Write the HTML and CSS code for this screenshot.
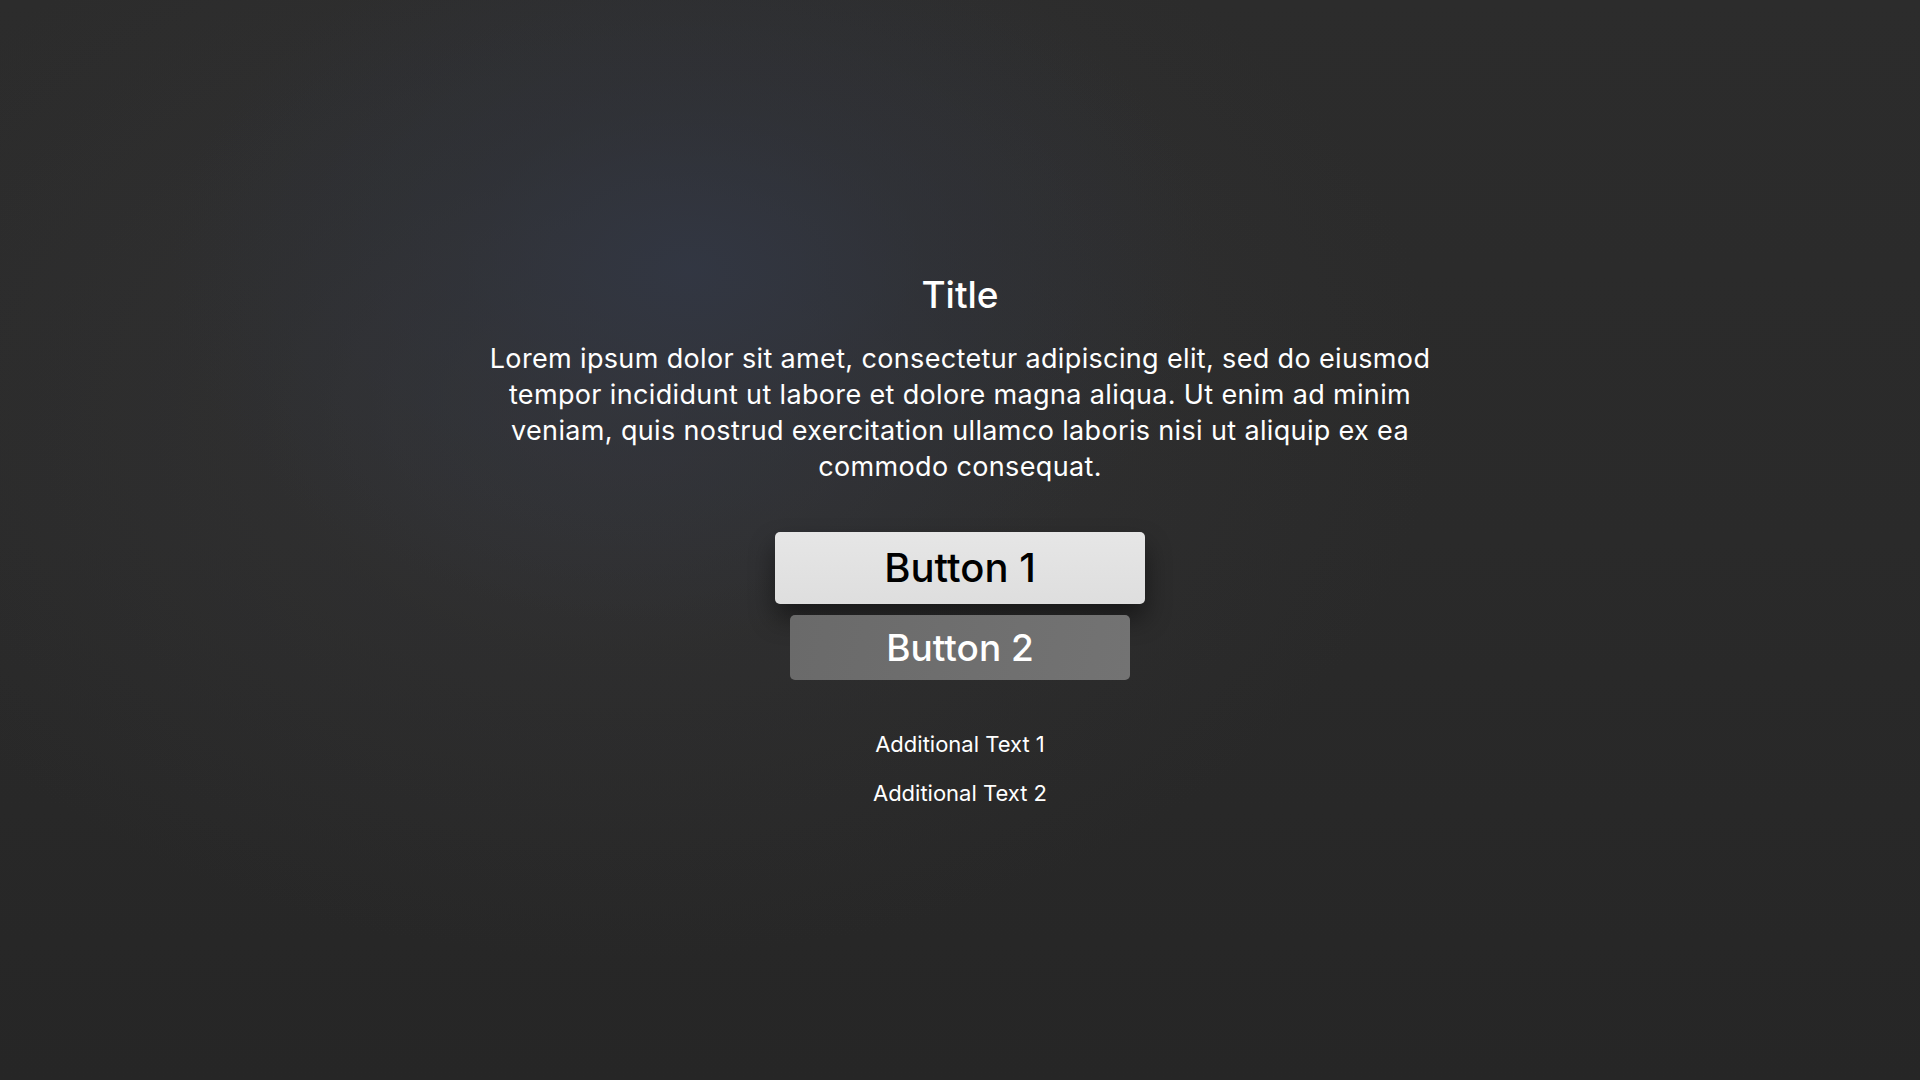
FILE: index.html
```html
<!DOCTYPE html>
<html lang="en">
<head>
<meta charset="utf-8">
<title>Alert</title>
<link rel="stylesheet" href="styles.css">
</head>
<body>
<main class="screen">
  <h1 class="title">Title</h1>
  <p class="message">Lorem ipsum dolor sit amet, consectetur adipiscing elit, sed do eiusmod tempor incididunt ut labore et dolore magna aliqua. Ut enim ad minim veniam, quis nostrud exercitation ullamco laboris nisi ut aliquip ex ea commodo consequat.</p>
  <div class="actions">
    <button class="btn btn-focused">Button 1</button>
    <button class="btn btn-normal">Button 2</button>
  </div>
  <div class="extras">
    <p class="extra">Additional Text 1</p>
    <p class="extra">Additional Text 2</p>
  </div>
</main>
</body>
</html>
```
FILE: styles.css
```css
html, body {
  margin: 0;
  padding: 0;
  width: 1920px;
  height: 1080px;
  overflow: hidden;
}
body {
  font-family: Inter, "Noto Sans", sans-serif;
  color: #ffffff;
  background:
    radial-gradient(ellipse 520px 360px at 690px 270px, rgba(50,55,68,0.9) 0%, rgba(48,52,62,0.5) 45%, rgba(44,44,46,0) 100%),
    radial-gradient(ellipse 820px 560px at 620px 400px, rgba(62,62,66,0.55) 0%, rgba(56,56,58,0.3) 45%, rgba(44,44,44,0) 100%),
    linear-gradient(180deg, #2c2c2c 0%, #2a2a2a 50%, #262626 100%);
}
.screen {
  display: flex;
  flex-direction: column;
  align-items: center;
  padding-top: 273px;
}
.title {
  margin: 0;
  font-size: 37px;
  line-height: 44px;
  font-weight: 500;
}
.message {
  margin: 24px 0 0;
  width: 960px;
  text-align: center;
  font-size: 27px;
  letter-spacing: 0.35px;
  line-height: 36px;
  font-weight: 400;
}
.actions {
  margin-top: 47px;
  display: flex;
  flex-direction: column;
  align-items: center;
  gap: 11px;
}
.btn {
  border: none;
  display: flex;
  align-items: center;
  justify-content: center;
  font-family: Inter, "Noto Sans", sans-serif;
  font-weight: 500;
  padding: 0;
  border-radius: 5px;
}
.btn-focused {
  width: 370px;
  height: 72px;
  font-size: 40px;
  line-height: 40px;
  color: #000;
  background: linear-gradient(180deg, #e6e6e6, #dedede);
  box-shadow: 0 14px 26px rgba(0,0,0,0.45);
}
.btn-normal {
  width: 340px;
  height: 65px;
  font-size: 37px;
  line-height: 37px;
  color: #fff;
  background: linear-gradient(100deg, #6a6a6a, #737373);
}
.extras {
  margin-top: 50px;
  display: flex;
  flex-direction: column;
  align-items: center;
  gap: 21px;
}
.extra {
  margin: 0;
  font-size: 22px;
  line-height: 28px;
  font-weight: 400;
}
```
